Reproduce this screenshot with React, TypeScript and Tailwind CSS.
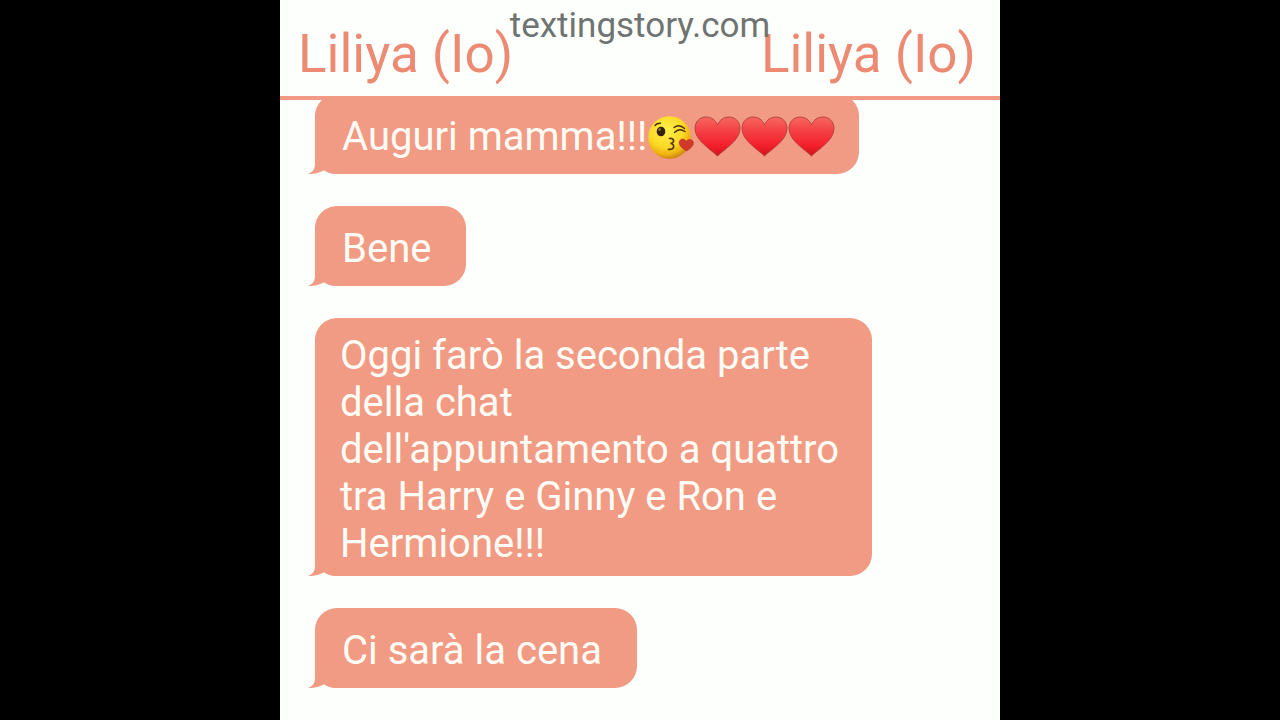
import type { ReactNode } from 'react';

interface Message {
  id: number;
  text: string;
  emojis?: ('kiss' | 'heart')[];
  long?: boolean;
}

const messages: Message[] = [
  { id: 1, text: 'Auguri mamma!!!', emojis: ['kiss', 'heart', 'heart', 'heart'] },
  { id: 2, text: 'Bene' },
  {
    id: 3,
    text: "Oggi farò la seconda parte della chat dell'appuntamento a quattro tra Harry e Ginny e Ron e Hermione!!!",
    long: true,
  },
  { id: 4, text: 'Ci sarà la cena' },
];

function KissEmoji() {
  return (
    <svg role="img" aria-label="Kiss" viewBox="0 0 47 47" className="h-[47px] w-[47px] shrink-0">
      <defs>
        <radialGradient id="face" cx="0.42" cy="0.32" r="0.68">
          <stop offset="0" stopColor="#fff04a" />
          <stop offset="0.6" stopColor="#fbd926" />
          <stop offset="0.85" stopColor="#eeb211" />
          <stop offset="1" stopColor="#d0860f" />
        </radialGradient>
      </defs>
      <circle cx="22.5" cy="23.5" r="21.3" fill="url(#face)" />
      <ellipse cx="14" cy="17.5" rx="4.3" ry="4.8" fill="#35200c" />
      <circle cx="12.6" cy="15.6" r="1.3" fill="#9a7440" />
      <path
        d="M8 11.5 Q10 9 13.5 9.3 M27 13.5 Q32 9.5 37.5 14.5 M27.5 18.5 Q32 13.5 38 17.5"
        fill="none"
        stroke="#4a2d0c"
        strokeWidth="1.4"
        strokeLinecap="round"
      />
      <path
        d="M22.5 24.5 C27 24 28.5 28.5 23.5 29.5 C28.5 30 27.5 36 21.5 35.3"
        fill="none"
        stroke="#5a360d"
        strokeWidth="1.7"
        strokeLinecap="round"
      />
      <path
        d="M39.5 37 C34.5 34 31.8 31 32.3 28 C33 24.5 37.3 24 39 27.4 C41.3 24.3 46.3 25.2 46.4 28.8 C46.4 32 43 35 39.5 37 Z"
        fill="#cf3a2d"
        stroke="#b82a22"
        strokeWidth="0.6"
      />
    </svg>
  );
}

function HeartEmoji() {
  return (
    <svg role="img" aria-label="Heart" viewBox="0 0 47 47" className="h-[47px] w-[47px] shrink-0">
      <defs>
        <linearGradient id="heart" x1="0" y1="0" x2="0" y2="1">
          <stop offset="0" stopColor="#f7685f" />
          <stop offset="0.3" stopColor="#f4464a" />
          <stop offset="0.7" stopColor="#f5222e" />
          <stop offset="1" stopColor="#d3111c" />
        </linearGradient>
      </defs>
      <path
        d="M23.5 42 C17 35.5 1 26.5 1 14.5 C1 7.5 6 3 12 3 C17.5 3 21.5 6 23.5 11 C25.5 6 29.5 3 35 3 C41 3 46 7.5 46 14.5 C46 26.5 30 35.5 23.5 42 Z"
        fill="url(#heart)"
        stroke="#b0403a"
        strokeWidth="0.9"
      />
    </svg>
  );
}

function Bubble({ padding, children }: { padding: string; children: ReactNode }) {
  return (
    <li
      className={`relative flex min-h-20 w-fit max-w-[557px] shrink-0 items-center rounded-[22px] bg-[#f19a84] pt-[14px] pb-[9px] ${padding}`}
    >
      {children}
      <svg
        aria-hidden="true"
        viewBox="0 0 28 24"
        className="absolute bottom-0 -left-[7px] h-6 w-7"
        fill="#f19a84"
      >
        <path d="M7 0 V15 C6.5 19.5 4.5 22.5 0 24 C7 24.3 12 22.5 16 20.3 C19 22.5 23 24 28 24 V0 Z" />
      </svg>
    </li>
  );
}

function bubblePadding(message: Message) {
  if (message.long) return 'pl-[25px] pr-8';
  if (message.emojis) return 'pl-[27px] pr-6';
  return 'pl-[27px] pr-[35px]';
}

export default function App() {
  return (
    <div className="flex h-screen justify-center bg-black font-['Roboto',sans-serif]">
      <main className="flex h-full w-full max-w-[720px] flex-col bg-[#fdfffc]">
        <header className="relative shrink-0 border-b-4 border-[#f19a84]">
          <div className="flex h-24 items-center justify-between pl-[18px] pr-6 pt-[14px] text-[53px] text-[#ec8a74]">
            <h1>Liliya (Io)</h1>
            <h2>Liliya (Io)</h2>
          </div>
          <p className="absolute inset-x-0 top-0 text-center text-[35px] leading-[52px] text-[#6f7473]">
            textingstory.com
          </p>
        </header>

        <ul className="flex min-h-0 flex-1 flex-col justify-end gap-8 overflow-hidden pb-8 pl-[35px] pr-8">
          {messages.map((message) => (
            <Bubble key={message.id} padding={bubblePadding(message)}>
              <p className="text-[40px] leading-[47px] text-[#fffdf5]">{message.text}</p>
              {message.emojis && (
                <span className="flex pt-0.5">
                  {message.emojis.map((emoji, i) =>
                    emoji === 'kiss' ? <KissEmoji key={i} /> : <HeartEmoji key={i} />
                  )}
                </span>
              )}
            </Bubble>
          ))}
        </ul>
      </main>
    </div>
  );
}
